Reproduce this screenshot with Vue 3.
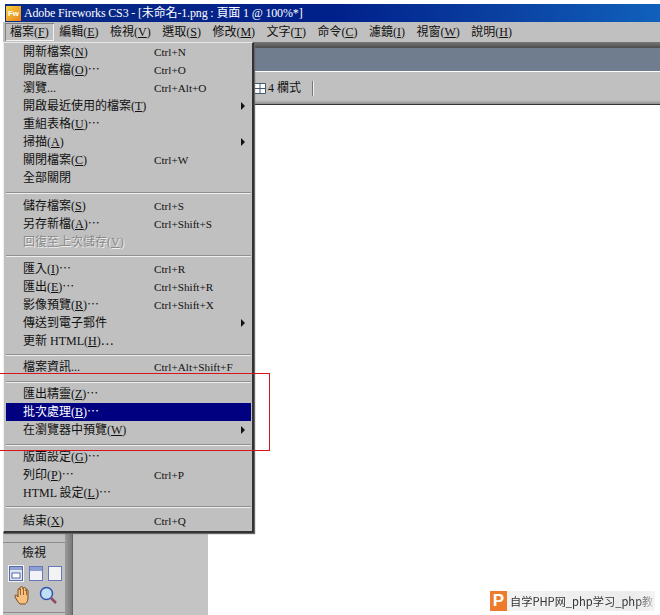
<script setup>
const menus = [
  ['檔案', 'F'], ['編輯', 'E'], ['檢視', 'V'], ['選取', 'S'], ['修改', 'M'],
  ['文字', 'T'], ['命令', 'C'], ['濾鏡', 'I'], ['視窗', 'W'], ['說明', 'H']
]
const groups = [
  {
    items: [
      { t: '開新檔案', k: 'N', s: 'Ctrl+N' },
      { t: '開啟舊檔', k: 'O', e: '⋯', s: 'Ctrl+O' },
      { t: '瀏覽...', s: 'Ctrl+Alt+O' },
      { t: '開啟最近使用的檔案', k: 'T', a: 1 },
      { t: '重組表格', k: 'U', e: '⋯' },
      { t: '掃描', k: 'A', a: 1 },
      { t: '關閉檔案', k: 'C', s: 'Ctrl+W' },
      { t: '全部關閉' }
    ]
  },
  {
    before: [5, 3],
    items: [
      { t: '儲存檔案', k: 'S', s: 'Ctrl+S' },
      { t: '另存新檔', k: 'A', e: '⋯', s: 'Ctrl+Shift+S' },
      { t: '回復至上次儲存', k: 'V', d: 1 }
    ]
  },
  {
    before: [4, 3],
    items: [
      { t: '匯入', k: 'I', e: '⋯', s: 'Ctrl+R' },
      { t: '匯出', k: 'E', e: '⋯', s: 'Ctrl+Shift+R' },
      { t: '影像預覽', k: 'R', e: '⋯', s: 'Ctrl+Shift+X' },
      { t: '傳送到電子郵件', a: 1 },
      { t: '更新 HTML', k: 'H', e: '⋯' }
    ]
  },
  { before: [4, 2], items: [{ t: '檔案資訊...', s: 'Ctrl+Alt+Shift+F' }] },
  {
    before: [5, 2],
    items: [
      { t: '匯出精靈', k: 'Z', e: '⋯' },
      { t: '批次處理', k: 'B', e: '⋯', h: 1 },
      { t: '在瀏覽器中預覽', k: 'W', a: 1 }
    ]
  },
  {
    before: [5, 2],
    items: [
      { t: '版面設定', k: 'G', e: '⋯' },
      { t: '列印', k: 'P', e: '⋯', s: 'Ctrl+P' },
      { t: 'HTML 設定', k: 'L', e: '⋯' }
    ]
  },
  { before: [4, 4], items: [{ t: '結束', k: 'X', s: 'Ctrl+Q' }] }
]
</script>

<template>
  <div class="screen">
    <div class="titlebar">
      <span class="fw">Fw</span>
      <span class="title">Adobe Fireworks CS3 - [未命名-1.png : 頁面 1 @ 100%*]</span>
    </div>
    <div class="menubar">
      <span v-for="m in menus" :key="m[0]" class="top">{{ m[0] }}(<u>{{ m[1] }}</u>)</span>
    </div>
    <div class="band"></div>
    <div class="slate"></div>
    <div class="toolbar">
      <svg class="grid" width="12" height="11" viewBox="0 0 12 11"><path d="M.5.5h11v10H.5zM6 .5v10M.5 5.5h11" fill="#fff" stroke="#46586e"/></svg>
      <span class="cols">4 欄式</span>
      <i class="tsep"></i>
    </div>
    <div class="work">
      <div class="tools">
        <div class="panel">
          <div class="plabel">檢視</div>
          <div class="prow first">
            <span class="sel"><svg width="14" height="15" viewBox="0 0 14 15"><rect x=".5" y=".5" width="13" height="14" fill="#dfe6f2" stroke="#5668a8"/><path d="M1 1h12v3H1z" fill="#8fa2d0"/><rect x="3" y="7" width="8" height="5" fill="#fff" stroke="#5668a8"/></svg></span>
            <svg width="14" height="15" viewBox="0 0 14 15"><rect x=".5" y=".5" width="13" height="14" fill="#f1f3f8" stroke="#6678b8"/><path d="M1 1h12v4H1z" fill="#8d9fd2"/></svg>
            <svg width="14" height="15" viewBox="0 0 14 15"><rect x=".5" y=".5" width="13" height="14" fill="#f3f3f3" stroke="#6678b8"/></svg>
          </div>
          <div class="prow second">
            <svg width="18" height="19" viewBox="0 0 18 19"><path d="M6 18c-2-2-5-6-5-8s2-1 3 1V4c0-2 2-2 2 0V2c0-2 3-2 3 0v1c0-2 3-2 3 0v2c0-2 2-2 2 0v7c0 3-2 6-3 6z" fill="#f5c080" stroke="#7a4a1e"/><path d="M6.500 4v5M9.500 3v6M12.500 4v5" stroke="#9a6430" fill="none"/></svg>
            <svg width="18" height="19" viewBox="0 0 18 19"><circle cx="7.500" cy="7.500" r="6" fill="#bfe0f4" stroke="#3553b0" stroke-width="1.500"/><path d="M12 12l5 5" stroke="#8a4a66" stroke-width="2.500"/></svg>
          </div>
        </div>
      </div>
      <div class="strip"></div>
      <div class="pasteboard"></div>
      <div class="canvas"></div>
    </div>

    <div class="menu">
      <template v-for="(g, gi) in groups" :key="gi">
        <div
          v-if="g.before"
          class="sep"
          :style="{ marginTop: g.before[0] + 'px', marginBottom: g.before[1] + 'px' }"
        ></div>
        <div
          v-for="it in g.items"
          :key="it.t"
          class="item"
          :class="{ hi: it.h, dis: it.d }"
        >
          <span class="lbl">{{ it.t }}<template v-if="it.k">(<u>{{ it.k }}</u>)</template>{{ it.e }}</span>
          <span v-if="it.s" class="sc">{{ it.s }}</span>
          <i v-if="it.a" class="arrow"></i>
        </div>
      </template>
    </div>

    <div class="redbox"></div>

    <div class="mark">
      <span class="p">P</span>
      <span class="marktext">自学PHP网_php学习_php教</span>
    </div>
  </div>
</template>

<style>
html, body { margin: 0; background: #fff; }
</style>

<style scoped>
.screen {
  position: relative;
  width: 660px;
  height: 615px;
  overflow: hidden;
  background: #fff;
  padding-top: 4px;
  box-sizing: border-box;
  display: flex;
  flex-direction: column;
  font: 12px/18px "Liberation Serif", "Noto Sans CJK TC", serif;
  color: #111;
}
.titlebar {
  height: 18px;
  margin-left: 5px;
  background: linear-gradient(90deg, #0a2a86 0%, #00208a 50%, #0a3fa0 75%, #1061bb 100%);
  color: #fff;
  display: flex;
  align-items: center;
  flex: none;
}
.fw {
  width: 15px;
  height: 15px;
  margin: 0 3px 0 1px;
  background: linear-gradient(135deg, #f6d23c, #e8801a);
  box-sizing: border-box;
  color: #fff;
  font: bold 8px/15px "Liberation Sans", sans-serif;
  text-align: center;
}
.title { font-size: 12px; letter-spacing: -0.15px; white-space: nowrap; }
.menubar {
  height: 20px;
  margin-left: 3px;
  background: #c0c0c0;
  display: flex;
  align-items: center;
  gap: 11.500px;
  padding-left: 2px;
  flex: none;
}
.top {
  white-space: nowrap;
  font-size: 12px;
}
.top:first-child {
  height: 18px;
  padding: 0 5px;
  margin-right: -6px;
  box-shadow: inset 1px 1px 0 #808080, inset -1px -1px 0 #f2f2f2;
}
.band {
  height: 6px;
  flex: none;
  margin-left: 3px;
  background: linear-gradient(#777, #4c4c4c);
}
.slate {
  height: 24px;
  flex: none;
  box-sizing: border-box;
  margin-left: 3px;
  background: #6f7d8e;
  border-bottom: 1px solid #fff;
}
.toolbar {
  height: 33px;
  flex: none;
  box-sizing: border-box;
  margin-left: 3px;
  background: linear-gradient(#c0c0c0 88%, #909090);
  border-bottom: 1px solid #333;
  display: flex;
  align-items: center;
  padding-left: 251px;
}
.grid { margin-right: 2px; }
.cols { font-size: 12px; }
.tsep {
  width: 1px;
  height: 15px;
  background: #777;
  box-shadow: 1px 0 0 #eee;
  margin-left: 11px;
}
.work {
  flex: 1;
  min-height: 0;
  margin-left: 3px;
  display: flex;
}
.tools {
  width: 62px;
  background: #c0c0c0;
  display: flex;
  flex-direction: column;
  justify-content: flex-end;
}
.panel {
  height: 71px;
  border-top: 1px solid #8c8c8c;
  border-bottom: 1px solid #8c8c8c;
  margin-bottom: 2px;
  box-sizing: border-box;
}
.plabel {
  text-align: center;
  font-size: 12px;
  line-height: 18px;
  margin-top: 1px;
}
.prow { display: flex; align-items: center; }
.first { gap: 5px; padding-left: 5px; margin-top: 3px; }
.sel {
  width: 16px;
  height: 17px;
  display: flex;
  align-items: center;
  justify-content: center;
  background: #f4f4f4;
}
.second { gap: 7px; padding-left: 11px; margin-top: 4px; }
.strip {
  width: 8px;
  background: linear-gradient(90deg, #9a9a9a, #7a7a7a 85%, #555);
}
.pasteboard { width: 135px; background: #c4c4c4; }
.canvas { flex: 1; background: #fff; }

.menu {
  position: absolute;
  left: 3px;
  top: 42px;
  width: 251px;
  height: 491px;
  box-sizing: border-box;
  padding: 0 1px 0 2px;
  background: #c0c0c0;
  border-top: 1px solid #e8e8e8;
  border-left: 1px solid #eee;
  border-right: 2px solid #333;
  border-bottom: 2px solid #333;
  box-shadow: 1px 1px 1px #666;
}
.item {
  position: relative;
  height: 18px;
  line-height: 18px;
  white-space: nowrap;
}
.lbl { position: absolute; left: 17px; top: 0; }
.sc { position: absolute; left: 148px; top: 0; font-size: 11.200px; }
.arrow {
  position: absolute;
  right: 6px;
  top: 5px;
  width: 0;
  height: 0;
  border-left: 4px solid #111;
  border-top: 4px solid transparent;
  border-bottom: 4px solid transparent;
}
.hi { background: #000080; color: #fff; }
.dis { color: #8a8a8a; text-shadow: 1px 1px 0 #eee; }
.sep {
  height: 2px;
  background: #8f8f8f;
  border-bottom: 1px solid #eee;
  box-sizing: border-box;
}
.redbox {
  position: absolute;
  left: -2px;
  top: 373px;
  width: 272px;
  height: 78px;
  box-sizing: border-box;
  border: 1px solid #d8141e;
}
.mark {
  position: absolute;
  left: 490px;
  top: 591px;
  width: 165px;
  height: 20px;
  display: flex;
  align-items: center;
  background: linear-gradient(90deg, #f3f3f3 0, #ececec 85%, #f4f4f4 100%);
  font: 11.200px/20px "Noto Sans CJK SC", "Noto Sans", sans-serif;
  color: #333;
  white-space: nowrap;
}
.p {
  flex: none;
  width: 17px;
  height: 20px;
  background: #ee7a2b;
  color: #fff;
  font: bold 17px/20px "Liberation Sans", sans-serif;
  text-align: center;
  margin-right: 3px;
}
.marktext {
  -webkit-mask-image: linear-gradient(90deg, #000 88%, rgba(0, 0, 0, 0.25) 100%);
  mask-image: linear-gradient(90deg, #000 88%, rgba(0, 0, 0, 0.25) 100%);
}
</style>
